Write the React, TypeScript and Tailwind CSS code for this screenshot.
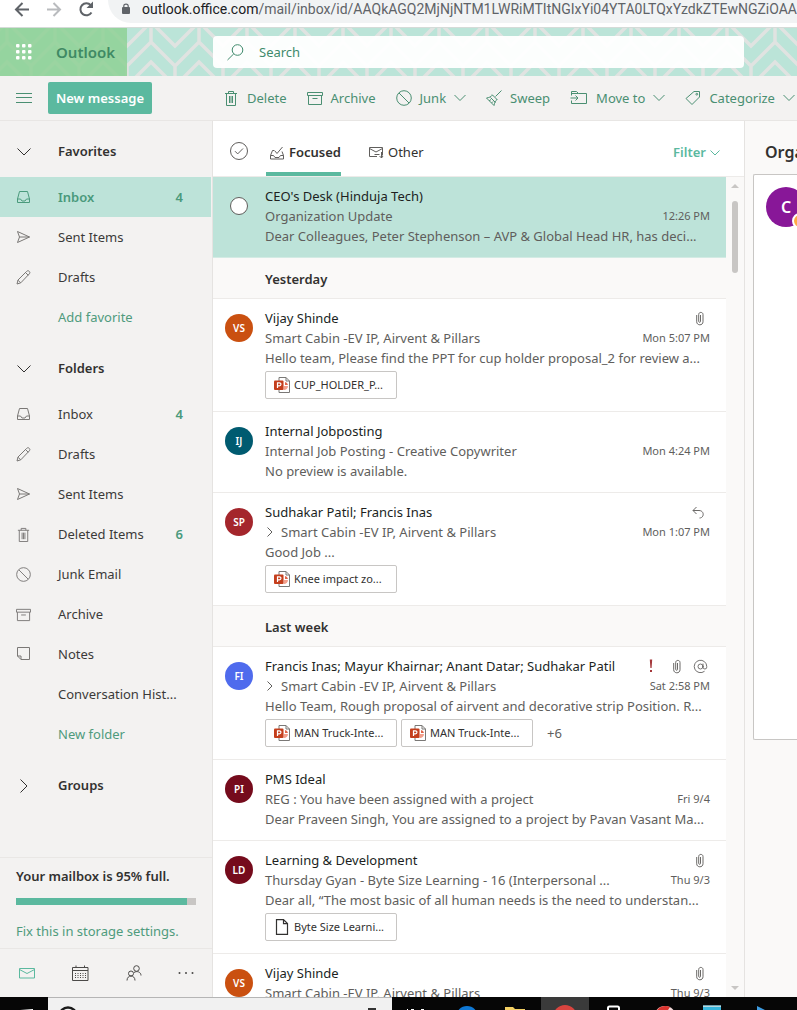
import type { ReactNode } from "react";
import { AtSign } from "lucide-react";

type IconProps = { children: ReactNode; w?: number; h?: number; size?: number; className?: string; sw?: number };

function Svg({ children, w = 16, h = 16, size, className = "", sw = 1 }: IconProps) {
  return (
    <svg
      width={size ?? w}
      height={size ?? h}
      viewBox={`0 0 ${w} ${h}`}
      fill="none"
      stroke="currentColor"
      strokeWidth={sw}
      className={`shrink-0 ${className}`}
      aria-hidden="true"
    >
      {children}
    </svg>
  );
}

const TrashIcon = ({ size }: { size?: number }) => (
  <Svg size={size}>
    <path d="M2 3.5h12M5.5 3.5v-2h5v2M3.5 3.5v12h9v-12M6.5 6v7M8 6v7M9.5 6v7" />
  </Svg>
);
const ArchiveIcon = ({ size }: { size?: number }) => (
  <Svg size={size}>
    <path d="M0.5 2.5h15v3h-15zM1.5 5.5v9h13v-9M5.5 8.5h5" />
  </Svg>
);
const BlockIcon = ({ size }: { size?: number }) => (
  <Svg size={size}>
    <circle cx="8" cy="8" r="7.3" />
    <path d="M3 3l10 10" />
  </Svg>
);
const SweepIcon = () => (
  <Svg>
    <path d="M15.5 0.5L9.5 6.5M6 4.5l5.5 5.5M6.5 5C5 7 3 7.500 0.500 8L8 15.500C8.500 13 9 11 11 9.500M4.500 7.500l5 5M3 11l2-1.500M5.500 13l1.500-1.500" />
  </Svg>
);
const MoveIcon = () => (
  <Svg w={18}>
    <path d="M1.5 5.500v-4h5l2 2h8v10h-15v-3M1.500 3.500h7M0.500 8h7.500M5.500 5.500L8 8l-2.500 2.500" />
  </Svg>
);
const TagIcon = () => (
  <Svg>
    <path d="M9 1.500h5.500v5.500L7 14.500 1 8.500z" />
    <circle cx="11.800" cy="4.200" r="0.900" />
  </Svg>
);
const ChevronDown = ({ w = 12 }: { w?: number }) => (
  <Svg w={w} h={8}>
    <path d={w === 12 ? "M0.500 1l5.500 5.500L11.500 1" : w === 10 ? "M0.500 1.500L5 6l4.500-4.500" : "M0.500 0.500L7 7l6.500-6.500"} />
  </Svg>
);
const ChevronRight = () => (
  <Svg w={8} h={14}>
    <path d="M0.500 0.500L7 7l-6.500 6.500" />
  </Svg>
);
const InboxIcon = () => (
  <Svg w={15} h={14}>
    <path d="M1.500 9L3.500 1.500h8L13.500 9V12.500H1.500zM1.500 9h3l1.500 2h3l1.500-2h3" />
  </Svg>
);
const SendIcon = () => (
  <Svg w={15} h={14}>
    <path d="M1.500 1.500L13.500 7l-12 5.500L3.500 7zM3.500 7h10" />
  </Svg>
);
const PencilIcon = () => (
  <Svg w={15} h={15}>
    <path d="M1 14l1-4L10.500 1.500c1-1 2-1 2.700-.2.900.8.900 1.700 0 2.700L4.800 12.800zM9.500 2.500l2.800 2.800M2 10.200l2.600 2.600" />
  </Svg>
);
const NoteIcon = () => (
  <Svg w={15} h={14}>
    <path d="M1.500 0.500h12v12h-8.500l-3.500-3.500zM1.500 9h3.500v3.500" />
  </Svg>
);
const FocusedIcon = () => (
  <Svg w={15} h={14}>
    <path d="M4 4.500H2.500L0.500 9.500V13h13V9.500L12 5.500M0.500 9.500h3l1.500 2h4l1.500-2h3M4.500 4.500l2.500 3L12.500 1" />
  </Svg>
);
const OtherIcon = () => (
  <Svg w={15} h={13}>
    <path d="M8 10.500H0.500v-9h13v8M0.500 2.500L7 6l6.500-3.500M12.500 6v6M10.500 10l2 2 1.500-2M5.500 8.500h5" />
  </Svg>
);
const ClipIcon = () => (
  <Svg w={8} h={15}>
    <path d="M4.500 4v6.500c0 1-1.800 1-1.800 0V3.500c0-2.800 4.300-2.800 4.300 0v7.300c0 4-6.300 4-6.300 0V4" />
  </Svg>
);
const ReplyIcon = () => (
  <Svg w={12} h={13}>
    <path d="M4.500 1L1 4.500 4.500 8M1 4.500h6c5.500 0 5.500 7.500 0.500 7.500" />
  </Svg>
);
const ImportantIcon = () => (
  <svg width="4" height="14" viewBox="0 0 4 14" fill="#a4373a" className="shrink-0" aria-hidden="true">
    <path d="M0.800 0.500h2.400L2.600 9H1.400zM1 11h2v2H1z" />
  </svg>
);
const MailIcon = () => (
  <Svg w={18} h={12}>
    <path d="M1.500 1.500h15v9.500h-15zM1.500 2.500L9 6.500l7.500-4" />
  </Svg>
);
const CalendarIcon = () => (
  <Svg w={17} h={16}>
    <path d="M0.500 2.500h15.500v13H0.500zM0.500 5.500H16M4 0.500v2M12.500 0.500v2" />
    <path d="M3 8.500h11M3 10.500h11M3 12.500h11" strokeDasharray="1 1.500" />
  </Svg>
);
const PeopleIcon = () => (
  <Svg w={16} h={16}>
    <circle cx="10.500" cy="3.500" r="2.800" />
    <circle cx="5" cy="8.500" r="2.500" />
    <path d="M1 15.500c0-6 8-6 8 0M8 7.500c3-2 7-.5 7 3" />
  </Svg>
);

function HeaderPattern() {
  return (
    <svg className="absolute inset-0 h-full w-full" aria-hidden="true">
      <defs>
        <pattern id="herringbone" width="48" height="48" x="31" y="0" patternUnits="userSpaceOnUse">
          <rect width="48" height="48" fill="#bbe4d8" />
          <path
            d="M-2 20L24 -6L50 20M-2 40L24 14L50 40M-2 60L24 34L50 60M24 0v14M0 38v10M48 38v10"
            fill="none"
            stroke="#e0e3e1"
            strokeWidth="3.500"
          />
        </pattern>
      </defs>
      <rect width="100%" height="100%" fill="url(#herringbone)" />
    </svg>
  );
}

function BrowserBar() {
  return (
    <div className="flex h-7 shrink-0 items-start overflow-hidden border-b border-[#d5dbd8] bg-white pl-3.5 text-[#5f6368]">
      <div className="flex h-[18px] items-center gap-4">
        <button aria-label="Back">
          <Svg w={16} h={16} sw={2}>
            <path d="M15 8.500H2M8.500 2L2 8.500 8.500 15" />
          </Svg>
        </button>
        <button aria-label="Forward" className="text-[#b9bbbe]">
          <Svg w={16} h={16} sw={2}>
            <path d="M1 8.500h13M7.500 2L14 8.500 7.500 15" />
          </Svg>
        </button>
        <button aria-label="Reload">
          <Svg w={16} h={16} sw={2}>
            <path d="M13.500 11.500A6 6 0 1 1 12.800 4.200L14 5.500" />
            <path d="M15 0.500v6.500H8.500z" fill="currentColor" stroke="none" />
          </Svg>
        </button>
      </div>
      <div className="ml-3.5 flex h-[23px] min-w-0 flex-1 items-start gap-3 overflow-hidden rounded-bl-full bg-[#f1f3f4] pl-3.5">
        <svg width="8" height="12" viewBox="0 0 8 12" className="mt-[3px] shrink-0" aria-hidden="true">
          <rect y="4" width="8" height="7" rx="1" fill="#5f6368" />
          <path d="M1.800 5V3c0-2.600 4.400-2.600 4.400 0v2" fill="none" stroke="#5f6368" strokeWidth="1.200" />
        </svg>
        <span className="font-['Roboto',sans-serif] text-[14px] leading-[18px] whitespace-nowrap">
          <span className="text-[#202124]">outlook.office.com</span>
          /mail/inbox/id/AAQkAGQ2MjNjNTM1LWRiMTItNGIxYi04YTA0LTQxYzdkZTEwNGZiOAAQ
        </span>
      </div>
    </div>
  );
}

function Header() {
  return (
    <header className="relative flex h-12 shrink-0 items-center">
      <HeaderPattern />
      <div className="relative flex h-full w-[127px] items-center gap-6 bg-[#8ed195]/85 pl-4">
        <button aria-label="App launcher">
          <svg width="16" height="16" viewBox="0 0 16 16" fill="#ffffff" aria-hidden="true">
            {[0, 6, 12].flatMap((y) => [0, 6, 12].map((x) => <rect key={`${x}-${y}`} x={x} y={y} width="3.500" height="3.500" rx="1" />))}
          </svg>
        </button>
        <a href="#outlook" className="text-[15px] font-semibold text-[#3f8a64]">
          Outlook
        </a>
      </div>
      <label className="relative ml-[86px] flex h-8 w-[531px] items-center gap-[15px] rounded-sm bg-white/95 pl-3.5 text-[#3f8a6c]">
        <Svg w={17} h={17}>
          <circle cx="10.500" cy="6" r="5.300" />
          <path d="M6.800 9.800L0.500 16" />
        </Svg>
        <input
          aria-label="Search"
          placeholder="Search"
          className="min-w-0 flex-1 bg-transparent pt-0.5 text-[13px] outline-none placeholder:text-[#3f8a6c]"
        />
      </label>
    </header>
  );
}

function Command({ icon, label, menu }: { icon: ReactNode; label: string; menu?: boolean }) {
  return (
    <button className="flex shrink-0 items-center gap-2">
      {icon}
      <span className="pt-0.5">{label}</span>
      {menu && <ChevronDown />}
    </button>
  );
}

function CommandBar() {
  return (
    <div className="flex h-[45px] shrink-0 items-center overflow-hidden border-b border-[#e8e6e4] bg-[#f3f2f1] text-[13px] text-[#4a8f72]">
      <div className="flex w-[213px] shrink-0 items-center gap-4 pl-4">
        <button aria-label="Toggle navigation">
          <Svg w={16} h={12}>
            <path d="M0 1.500h16M0 5.500h16M0 10.500h16" />
          </Svg>
        </button>
        <button className="h-8 w-[104px] rounded-xs bg-[#5bb99f] pt-0.5 font-semibold whitespace-nowrap text-white">New message</button>
      </div>
      <div className="flex items-center gap-5 pl-2.5 whitespace-nowrap">
        <Command icon={<TrashIcon />} label="Delete" />
        <Command icon={<ArchiveIcon />} label="Archive" />
        <Command icon={<BlockIcon />} label="Junk" menu />
        <Command icon={<SweepIcon />} label="Sweep" />
        <Command icon={<MoveIcon />} label="Move to" menu />
        <Command icon={<TagIcon />} label="Categorize" menu />
      </div>
    </div>
  );
}

function FolderHeading({ label, open }: { label: string; open?: boolean }) {
  return (
    <button className="mt-2.5 mb-1.5 flex h-10 w-full items-center pt-0.5 pl-4 font-semibold">
      <span className="flex w-[42px] pl-px">{open ? <ChevronDown w={14} /> : <span className="pl-[3px]"><ChevronRight /></span>}</span>
      {label}
    </button>
  );
}

function Folder({ icon, label, count, active }: { icon?: ReactNode; label: string; count?: number; active?: boolean }) {
  return (
    <a
      href="#folder"
      className={
        active
          ? "mr-px flex h-10 items-center bg-[#bde3d9] pr-7 pl-4 font-semibold text-[#4a9a7c]"
          : "mr-px flex h-10 items-center pr-7 pl-4 text-[#3b3a39]"
      }
    >
      <span className={active ? "w-[42px] text-[#4a9a7c]" : "w-[42px] text-[#7a7876]"}>{icon}</span>
      <span className="flex-1 pt-0.5 whitespace-nowrap">{label}</span>
      {count !== undefined && <span className="pt-0.5 font-semibold text-[#4a9a7c]">{count}</span>}
    </a>
  );
}

function FolderAction({ label }: { label: string }) {
  return (
    <a href="#add" className="flex h-10 items-center pt-0.5 pl-[58px] text-[#4f9b7d]">
      {label}
    </a>
  );
}

function Sidebar() {
  return (
    <aside className="flex w-[213px] shrink-0 flex-col border-r border-[#e5e3e1] bg-[#f3f2f1] text-[13px] text-[#323130]">
      <nav className="flex min-h-0 flex-1 flex-col gap-px overflow-hidden">
        <section>
          <FolderHeading label="Favorites" open />
          <Folder icon={<InboxIcon />} label="Inbox" count={4} active />
          <Folder icon={<SendIcon />} label="Sent Items" />
          <Folder icon={<PencilIcon />} label="Drafts" />
          <FolderAction label="Add favorite" />
        </section>
        <section>
          <FolderHeading label="Folders" open />
          <Folder icon={<InboxIcon />} label="Inbox" count={4} />
          <Folder icon={<PencilIcon />} label="Drafts" />
          <Folder icon={<SendIcon />} label="Sent Items" />
          <Folder icon={<TrashIcon size={15} />} label="Deleted Items" count={6} />
          <Folder icon={<BlockIcon size={15} />} label="Junk Email" />
          <Folder icon={<ArchiveIcon size={15} />} label="Archive" />
          <Folder icon={<NoteIcon />} label="Notes" />
          <Folder label="Conversation Hist..." />
          <FolderAction label="New folder" />
        </section>
        <FolderHeading label="Groups" />
      </nav>
      <div className="flex h-[91px] shrink-0 flex-col border-t border-[#e9e7e5] px-4 pt-2">
        <p className="leading-5 font-semibold">Your mailbox is 95% full.</p>
        <div className="mt-3 h-[7px] bg-[#c8c6c4]">
          <div className="h-full w-[95%] bg-[#5bb99f]" />
        </div>
        <a href="#storage" className="mt-4 leading-5 whitespace-nowrap text-[#4f9b7d]">
          Fix this in storage settings.
        </a>
      </div>
      <div className="flex h-[49px] shrink-0 items-center justify-between border-t border-[#e9e7e5] pr-[18px] pl-[18px] text-[#4b4a48]">
        <button aria-label="Mail" className="text-[#5bb99f]"><MailIcon /></button>
        <button aria-label="Calendar"><CalendarIcon /></button>
        <button aria-label="People"><PeopleIcon /></button>
        <button aria-label="More">
          <svg width="16" height="4" viewBox="0 0 16 4" fill="currentColor" aria-hidden="true">
            <circle cx="1.500" cy="2" r="1" /><circle cx="8" cy="2" r="1" /><circle cx="14.500" cy="2" r="1" />
          </svg>
        </button>
      </div>
    </aside>
  );
}

function PowerPointIcon() {
  return (
    <svg width="16" height="16" viewBox="0 0 16 16" className="shrink-0" aria-hidden="true">
      <path d="M5 0.500h7L15.500 4v11.500H5z" fill="#fff" stroke="#7a7876" />
      <path d="M12 0.500V4h3.500" fill="none" stroke="#7a7876" />
      <path d="M10 5v4h4a4 4 0 0 1-4.500 4" fill="#f3a08c" />
      <path d="M11 5a4 4 0 0 1 3 3h-3z" fill="#e0664b" />
      <rect x="0" y="3.500" width="9.500" height="9.500" rx="1" fill="#c43e1c" />
      <path d="M3.500 11V5.800h1.800c2.200 0 2.200 3 0 3H3.500" fill="none" stroke="#fff" strokeWidth="1.200" />
    </svg>
  );
}

function FileIcon() {
  return (
    <svg width="16" height="16" viewBox="0 0 16 16" fill="none" stroke="#323130" strokeWidth="1.200" className="shrink-0" aria-hidden="true">
      <path d="M2.500 0.600h7l4 4v10.800h-11zM9.500 0.600v4h4" />
    </svg>
  );
}

type Mail = {
  initials?: string;
  color?: string;
  from: string;
  subject: string;
  thread?: boolean;
  time: string;
  preview: string;
  flags?: ReactNode;
  files?: string[];
  fileIcon?: ReactNode;
  more?: string;
  selected?: boolean;
};

const today: Mail[] = [
  {
    from: "CEO's Desk (Hinduja Tech)",
    subject: "Organization Update",
    time: "12:26 PM",
    preview: "Dear Colleagues, Peter Stephenson – AVP & Global Head HR, has deci...",
    selected: true,
  },
];

const yesterday: Mail[] = [
  {
    initials: "VS",
    color: "bg-[#ca5010]",
    from: "Vijay Shinde",
    subject: "Smart Cabin -EV IP, Airvent & Pillars",
    time: "Mon 5:07 PM",
    preview: "Hello team, Please find the PPT for cup holder proposal_2 for review a...",
    flags: <ClipIcon />,
    files: ["CUP_HOLDER_P..."],
  },
  {
    initials: "IJ",
    color: "bg-[#005b70]",
    from: "Internal Jobposting",
    subject: "Internal Job Posting - Creative Copywriter",
    time: "Mon 4:24 PM",
    preview: "No preview is available.",
  },
  {
    initials: "SP",
    color: "bg-[#a4262c]",
    from: "Sudhakar Patil; Francis Inas",
    subject: "Smart Cabin -EV IP, Airvent & Pillars",
    thread: true,
    time: "Mon 1:07 PM",
    preview: "Good Job ...",
    flags: <ReplyIcon />,
    files: ["Knee impact zo..."],
  },
];

const lastWeek: Mail[] = [
  {
    initials: "FI",
    color: "bg-[#4f6bed]",
    from: "Francis Inas; Mayur Khairnar; Anant Datar; Sudhakar Patil",
    subject: "Smart Cabin -EV IP, Airvent & Pillars",
    thread: true,
    time: "Sat 2:58 PM",
    preview: "Hello Team, Rough proposal of airvent and decorative strip Position. R...",
    flags: (
      <>
        <ImportantIcon />
        <ClipIcon />
        <AtSign size={15} strokeWidth={1.5} className="-mr-1 -ml-2" />
      </>
    ),
    files: ["MAN Truck-Inte...", "MAN Truck-Inte..."],
    more: "+6",
  },
  {
    initials: "PI",
    color: "bg-[#750b1c]",
    from: "PMS Ideal",
    subject: "REG : You have been assigned with a project",
    time: "Fri 9/4",
    preview: "Dear Praveen Singh, You are assigned to a project by Pavan Vasant Ma...",
  },
  {
    initials: "LD",
    color: "bg-[#750b1c]",
    from: "Learning & Development",
    subject: "Thursday Gyan - Byte Size Learning - 16 (Interpersonal ...",
    time: "Thu 9/3",
    preview: "Dear all, “The most basic of all human needs is the need to understan...",
    flags: <ClipIcon />,
    files: ["Byte Size Learni..."],
    fileIcon: <FileIcon />,
  },
  {
    initials: "VS",
    color: "bg-[#ca5010]",
    from: "Vijay Shinde",
    subject: "Smart Cabin -EV IP, Airvent & Pillars",
    time: "Thu 9/3",
    preview: "",
    flags: <ClipIcon />,
  },
];

function MailRow({ mail }: { mail: Mail }) {
  return (
    <article
      className={
        mail.selected
          ? "flex gap-3 border-b border-[#d3ebe4] bg-[#bde3d9] pt-[9px] pr-4 pb-[11px] pl-3"
          : "flex gap-3 border-b border-[#edebe9] bg-white pt-[9px] pr-4 pb-[11px] pl-3"
      }
    >
      {mail.selected ? (
        <span className="flex h-10 w-7 shrink-0 items-center justify-center">
          <input type="checkbox" aria-label={`Select ${mail.from}`} className="size-[18px] appearance-none rounded-full border border-[#605e5c] bg-white" />
        </span>
      ) : (
        <span className={`mt-1.5 flex size-7 shrink-0 items-center justify-center rounded-full text-[10px] font-semibold text-white ${mail.color}`}>
          {mail.initials}
        </span>
      )}
      <div className="min-w-0 flex-1 leading-5 whitespace-nowrap">
        <div className="flex items-center justify-between">
          <span className="text-[#201f1e]">{mail.from}</span>
          <span className="flex items-center gap-5 pr-1.5 text-[#6b6967]">{mail.flags}</span>
        </div>
        <div className="flex items-center justify-between text-[#605e5c]">
          <span className="flex items-center">
            {mail.thread && (
              <Svg w={16} h={10}>
                <path d="M2.500 0.500L7 5 2.500 9.500" />
              </Svg>
            )}
            {mail.subject}
          </span>
          <span className="text-[11px]">{mail.time}</span>
        </div>
        <p className="h-5 text-[#605e5c]">{mail.preview}</p>
        {mail.files && (
          <div className="flex h-8 items-start gap-1 pt-[3px] text-[#605e5c]">
            {mail.files.map((file, i) => (
              <button key={i} className="flex h-7 w-[132px] shrink-0 items-center gap-1 rounded-xs border border-[#c8c6c4] bg-white pl-2 text-[11px] text-[#323130]">
                {mail.fileIcon ?? <PowerPointIcon />}
                {file}
              </button>
            ))}
            {mail.more && <span className="pt-1 pl-2.5">{mail.more}</span>}
          </div>
        )}
      </div>
    </article>
  );
}

function GroupHeading({ label }: { label: string }) {
  return (
    <h2 className="flex h-[41px] items-center border-b border-[#edebe9] bg-[#faf9f8] pt-1 pl-[52px] font-semibold text-[#323130]">
      {label}
    </h2>
  );
}

function MessageList() {
  return (
    <main className="flex w-[532px] shrink-0 flex-col border-r border-[#e5e3e1] text-[13px]">
      <div className="flex h-14 shrink-0 items-center border-b border-[#edebe9] bg-white pr-6 pl-4 text-[#323130]">
        <button aria-label="Select all" className="mt-1 mr-[17px] text-[#605e5c]">
          <Svg w={20} h={20}>
            <circle cx="10" cy="10" r="8.500" />
            <path d="M6 10.200l2.700 2.700L14 7.500" />
          </Svg>
        </button>
        <button className="flex h-full items-center gap-1 border-b-4 border-[#5bb99f] pt-3 pl-1 font-semibold">
          <span className="text-[#605e5c]"><FocusedIcon /></span>
          Focused
        </button>
        <button className="ml-7 flex h-full items-center gap-1 border-b-4 border-transparent pt-3">
          <span className="text-[#605e5c]"><OtherIcon /></span>
          Other
        </button>
        <button className="ml-auto flex items-center gap-1 pt-2 font-semibold text-[#5bb99f]">
          Filter
          <ChevronDown w={10} />
        </button>
      </div>
      <div className="flex min-h-0 flex-1">
        <div className="min-w-0 flex-1 overflow-hidden bg-white">
          {today.map((m) => <MailRow key={m.from} mail={m} />)}
          <GroupHeading label="Yesterday" />
          {yesterday.map((m) => <MailRow key={m.from} mail={m} />)}
          <GroupHeading label="Last week" />
          {lastWeek.map((m) => <MailRow key={m.from} mail={m} />)}
        </div>
        <div className="flex w-[18px] shrink-0 flex-col items-center bg-[#faf9f8] py-[7px]">
          <svg width="8" height="4" viewBox="0 0 8 4" fill="#c8c6c4" aria-hidden="true"><path d="M0 4L4 0l4 4z" /></svg>
          <div className="mt-[13px] h-[72px] w-1.5 rounded-full bg-[#c8c6c4]" />
          <svg width="8" height="4" viewBox="0 0 8 4" fill="#c8c6c4" className="mt-auto" aria-hidden="true"><path d="M0 0l4 4 4-4z" /></svg>
        </div>
      </div>
    </main>
  );
}

function ReadingPane() {
  return (
    <section className="min-w-0 flex-1 overflow-hidden bg-[#faf9f8] pl-2">
      <h1 className="flex h-[53px] items-center pt-2 pl-3 text-[16px] font-semibold whitespace-nowrap text-[#323130]">Organization Update</h1>
      <div className="h-[566px] rounded-l-xs border border-r-0 border-[#c8c6c4] bg-white pt-3 pl-3">
        <div className="relative flex size-10 items-center justify-center rounded-full bg-[#881798] text-[16px] font-semibold text-white">
          C
          <span className="absolute -right-0.5 -bottom-0.5 size-4 rounded-full border-2 border-white bg-[#ffaa44]" />
        </div>
      </div>
    </section>
  );
}

function Taskbar() {
  return (
    <footer className="flex h-[13px] shrink-0 overflow-hidden bg-[#060606]">
      <div className="flex w-12 shrink-0 pt-3 pl-5">
        <svg width="13" height="2" viewBox="0 0 13 2" fill="#fff" aria-hidden="true"><path d="M0 2V1l13-1v2z" /></svg>
      </div>
      <div className="flex w-[344px] shrink-0 justify-between border-t border-[#b5b5b5] bg-[#f1f1f1] pt-2 pr-4 pl-2.5">
        <svg width="20" height="20" viewBox="0 0 20 20" fill="none" stroke="#1b1b1b" strokeWidth="2.500" aria-hidden="true"><circle cx="10" cy="10" r="8.500" /></svg>
        <svg width="8" height="4" viewBox="0 0 8 4" fill="#333" aria-hidden="true"><rect y="2" width="8" height="2" /></svg>
      </div>
      <svg width="405" height="13" viewBox="0 0 405 13" className="shrink-0" aria-hidden="true">
        <path d="M15 12h1v1h-1zM19 12h3v1h-3zM29 12h3v1h-3z" fill="#fff" />
        <circle cx="75" cy="20" r="11" fill="#0f78d4" />
        <path d="M113 10h8l2 2h10v1h-20z" fill="#f3cf63" />
        <rect x="149" width="48" height="13" fill="#3a3a3a" />
        <circle cx="173" cy="20" r="12" fill="#d9443f" />
        <rect x="216" y="9.500" width="11" height="12" rx="1.500" fill="none" stroke="#fff" strokeWidth="2" />
        <circle cx="273" cy="20" r="11" fill="#f2d9d9" />
        <path d="M265 13a11 11 0 0 1 13-3l-2 3z" fill="#d9342f" />
        <rect x="311" y="8.500" width="18" height="5" fill="#37b5dc" />
        <rect x="311" y="8.500" width="18" height="1.500" fill="#b8d6de" />
        <path d="M365 9l8 4h-8z" fill="#3d9be0" />
      </svg>
    </footer>
  );
}

export default function App() {
  return (
    <div className="flex h-screen flex-col overflow-hidden bg-white font-['Noto_Sans',sans-serif]">
      <BrowserBar />
      <Header />
      <CommandBar />
      <div className="flex min-h-0 flex-1">
        <Sidebar />
        <MessageList />
        <ReadingPane />
      </div>
      <Taskbar />
    </div>
  );
}
